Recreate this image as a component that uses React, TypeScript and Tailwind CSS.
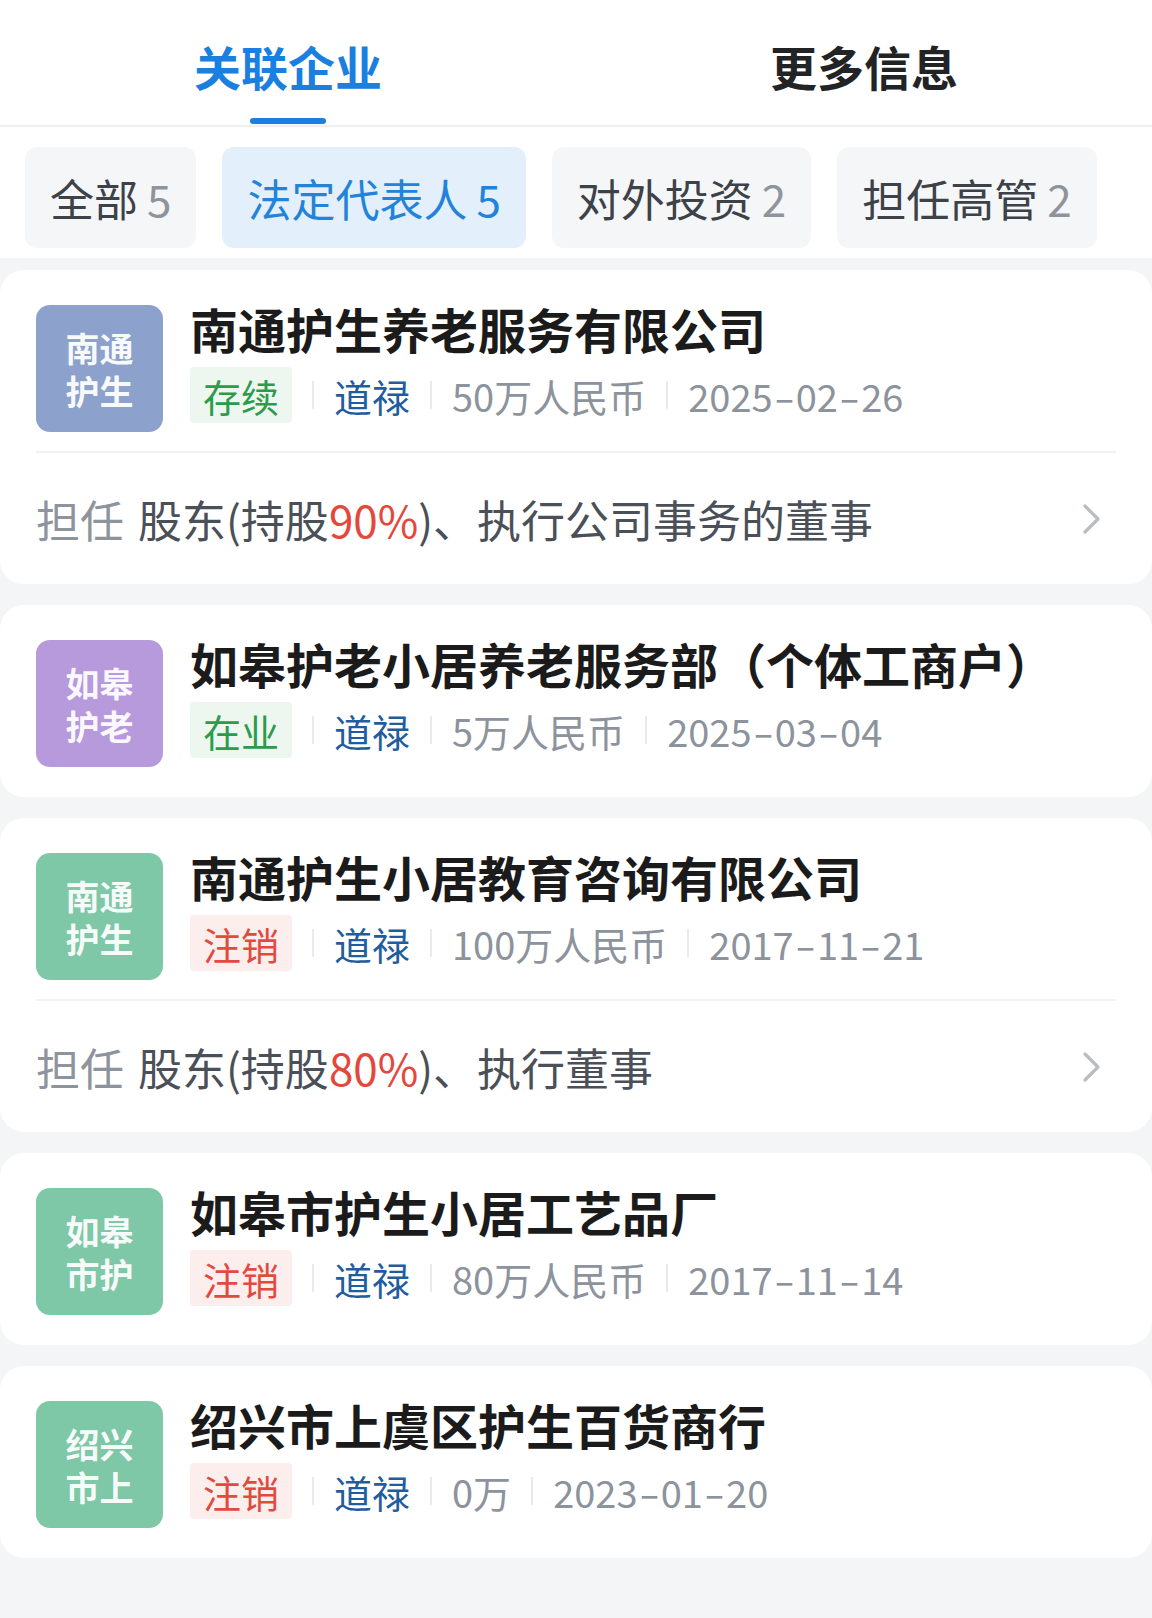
import React from "react";

type Card = {
  logo: [string, string];
  color: string;
  name: string;
  status: string;
  red: boolean;
  capital: string;
  date: string;
  role?: { pct: string; post: string };
};

const cards: Card[] = [
  {
    logo: ["南通", "护生"],
    color: "bg-[#8ca2cd]",
    name: "南通护生养老服务有限公司",
    status: "存续",
    red: false,
    capital: "50万人民币",
    date: "2025-02-26",
    role: { pct: "90%", post: ")、执行公司事务的董事" },
  },
  {
    logo: ["如皋", "护老"],
    color: "bg-[#b69adb]",
    name: "如皋护老小居养老服务部（个体工商户）",
    status: "在业",
    red: false,
    capital: "5万人民币",
    date: "2025-03-04",
  },
  {
    logo: ["南通", "护生"],
    color: "bg-[#7ec8a7]",
    name: "南通护生小居教育咨询有限公司",
    status: "注销",
    red: true,
    capital: "100万人民币",
    date: "2017-11-21",
    role: { pct: "80%", post: ")、执行董事" },
  },
  {
    logo: ["如皋", "市护"],
    color: "bg-[#7ec8a7]",
    name: "如皋市护生小居工艺品厂",
    status: "注销",
    red: true,
    capital: "80万人民币",
    date: "2017-11-14",
  },
  {
    logo: ["绍兴", "市上"],
    color: "bg-[#7ec8a7]",
    name: "绍兴市上虞区护生百货商行",
    status: "注销",
    red: true,
    capital: "0万",
    date: "2023-01-20",
  },
];

const Sep = () => <span className="mx-[20px] h-[28px] w-[2px] bg-[#e8eaed]" />;

function DateText({ d }: { d: string }) {
  const parts = d.split("-");
  return (
    <span className="text-[38px] text-[#8c939c]">
      {parts.map((p, i) => (
        <React.Fragment key={i}>
          {i > 0 && <span className="mx-[5px] inline-block scale-x-[1.6]">-</span>}
          {p}
        </React.Fragment>
      ))}
    </span>
  );
}

function CompanyCard({ c }: { c: Card }) {
  return (
    <div className="rounded-[24px] bg-white px-[36px]">
      <div className={`flex items-start pt-[35px] ${c.role ? "pb-[19px]" : "pb-[30px]"}`}>
        <div
          className={`flex h-[127px] w-[127px] shrink-0 items-center justify-center rounded-[14px] ${c.color} text-center text-[34px] font-bold leading-[43px] text-white/95`}
        >
          <span>
            {c.logo[0]}
            <br />
            {c.logo[1]}
          </span>
        </div>
        <div className="ml-[27px] flex flex-col">
          <div className="-mt-[6px] whitespace-nowrap text-[48px] font-bold leading-[58px] text-[#1b1b1b]">
            {c.name}
          </div>
          <div className="mt-[10px] flex h-[56px] items-center">
            <span
              className={`flex h-[56px] items-center rounded-[4px] px-[13px] text-[38px] ${
                c.red ? "bg-[#fdeeee] text-[#e24a3f]" : "bg-[#edf7f0] text-[#2a9c4b]"
              }`}
            >
              {c.status}
            </span>
            <Sep />
            <span className="text-[38px] text-[#1f5d9e]">道禄</span>
            <Sep />
            <span className="text-[38px] text-[#8c939c]">{c.capital}</span>
            <Sep />
            <DateText d={c.date} />
          </div>
        </div>
      </div>
      {c.role && (
        <div className="flex h-[133px] items-center border-t-2 border-[#f0f1f3]">
          <div className="flex-1 whitespace-nowrap text-[44px] text-[#4b5058]">
            <span className="text-[#8e949c]">担任</span>
            <span className="ml-[14px]">股东(持股</span>
            <span className="text-[#e4483b]">{c.role.pct}</span>
            <span>{c.role.post}</span>
          </div>
          <svg width="24" height="32" viewBox="0 0 24 32" className="mr-[12px]">
            <polyline
              points="5,3 18,16 5,29"
              fill="none"
              stroke="#b9bdc3"
              strokeWidth="3.2"
              strokeLinecap="round"
              strokeLinejoin="round"
            />
          </svg>
        </div>
      )}
    </div>
  );
}

export default function App() {
  const chips = [
    { t: "全部", n: "5", active: false },
    { t: "法定代表人", n: "5", active: true },
    { t: "对外投资", n: "2", active: false },
    { t: "担任高管", n: "2", active: false },
  ];
  return (
    <div className="min-h-[1618px] w-[1152px] overflow-hidden bg-[#f4f5f7] font-['Noto_Sans_CJK_SC','Noto_Sans',sans-serif]">
      <div className="bg-white">
        <div className="flex h-[127px] border-b-2 border-[#efeff1]">
          <div className="relative flex flex-1 items-center justify-center pt-[8px]">
            <span className="text-[47px] font-bold text-[#1a7fdf]">关联企业</span>
            <span className="absolute bottom-[1px] left-1/2 h-[6px] w-[76px] -translate-x-1/2 rounded-full bg-[#1a7fdf]" />
          </div>
          <div className="flex flex-1 items-center justify-center pt-[8px]">
            <span className="text-[47px] font-bold text-[#222325]">更多信息</span>
          </div>
        </div>
        <div className="flex gap-[26px] whitespace-nowrap px-[25px] pb-[10px] pt-[20px]">
          {chips.map((c) => (
            <div
              key={c.t}
              className={`flex h-[101px] shrink-0 items-center rounded-[12px] px-[25px] text-[44px] ${
                c.active ? "bg-[#e3f0fc] text-[#2383d9]" : "bg-[#f5f6f8] text-[#3d4148]"
              }`}
            >
              <span>{c.t}</span>
              <span className={`ml-[9px] ${c.active ? "text-[#2383d9]" : "text-[#8f949c]"}`}>{c.n}</span>
            </div>
          ))}
        </div>
      </div>
      <div className="flex flex-col gap-[21px] pt-[12px]">
        {cards.map((c, i) => (
          <CompanyCard key={i} c={c} />
        ))}
      </div>
    </div>
  );
}
